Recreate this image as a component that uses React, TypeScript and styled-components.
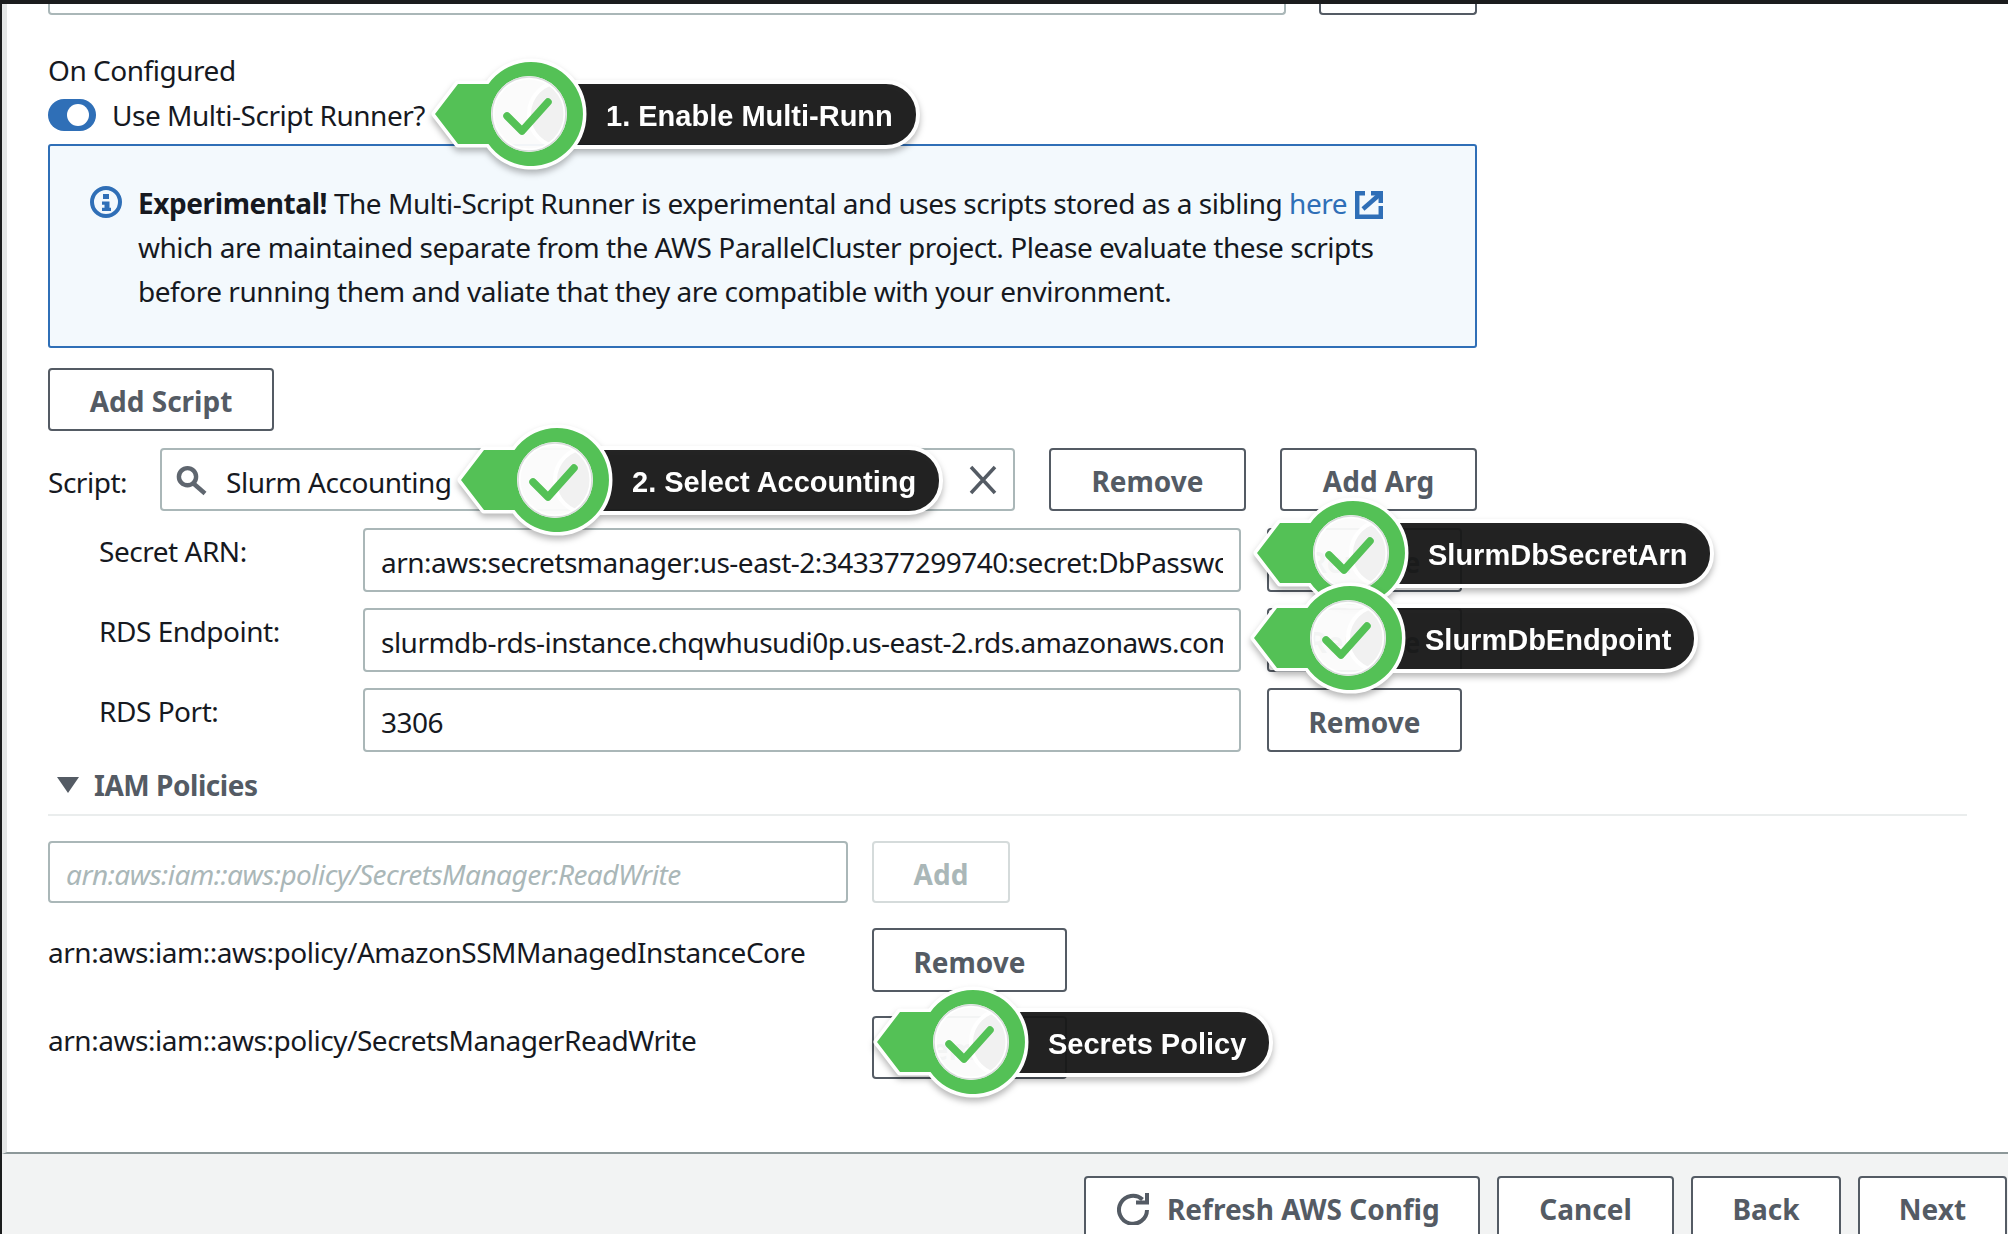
import React from 'react';
import styled, { createGlobalStyle } from 'styled-components';

const GlobalStyle = createGlobalStyle`
  html, body { margin: 0; padding: 0; background: #f2f3f3; }
  * { box-sizing: border-box; }
`;

const Page = styled.div`
  position: relative;
  width: 2008px;
  height: 1234px;
  overflow: hidden;
  display: flex;
  flex-direction: column;
  background: #f2f3f3;
  border-top: 4px solid #1b1c1d;
  border-left: 2px solid #1b1c1d;
  font-family: 'Noto Sans', sans-serif;
  font-size: 28px;
  letter-spacing: -0.47px;
  line-height: 44px;
  color: #16191f;
`;

const Panel = styled.div`
  height: 1150px;
  flex: none;
  background: #fff;
  border-left: 5px solid #e4e6e6;
  border-bottom: 2px solid #8d9899;
  padding-left: 41px;
`;

const Column = styled.div`
  width: 1429px;
`;

const TopStub = styled.div`
  display: flex;
  height: 11px;
  gap: 33px;
`;

const StubInput = styled.div`
  width: 1238px;
  border: 2px solid #aab7b8;
  border-top: 0;
  border-radius: 0 0 4px 4px;
`;

const StubButton = styled.div`
  width: 158px;
  border: 2px solid #545b64;
  border-top: 0;
  border-radius: 0 0 4px 4px;
`;

const SectionLabel = styled.div`
  margin-top: 33px;
`;

const ToggleRow = styled.div`
  display: flex;
  align-items: center;
  gap: 16px;
  height: 44px;
  margin-top: 1px;
`;

const Toggle = styled.div`
  position: relative;
  width: 48px;
  height: 32px;
  border-radius: 16px;
  background: #2f6fb7;
  &::after {
    content: '';
    position: absolute;
    top: 5px;
    right: 7px;
    width: 22px;
    height: 22px;
    border-radius: 50%;
    background: #fff;
  }
`;

const Alert = styled.div`
  display: flex;
  gap: 16px;
  height: 204px;
  margin-top: 7px;
  padding: 35px 0 0 40px;
  background: #f3f9fd;
  border: 2px solid #2f6fb7;
  border-radius: 3px;
`;

const AlertIcon = styled.svg`
  flex: none;
  width: 32px;
  height: 32px;
  margin-top: 5px;
`;

const AlertText = styled.div`
  white-space: nowrap;
  strong { font-weight: 700; letter-spacing: -0.42px; }
`;

const HereLink = styled.a`
  color: #2f6fb7;
  text-decoration: none;
`;

const ExternalIcon = styled.svg`
  width: 28px;
  height: 28px;
  margin-left: 8px;
  vertical-align: -5px;
`;

const Button = styled.button<{ $width: number; $height?: number; $disabled?: boolean }>`
  flex: none;
  display: inline-flex;
  align-items: center;
  justify-content: center;
  width: ${({ $width }) => $width}px;
  height: ${({ $height }) => $height ?? 63}px;
  padding: 3px 0 0;
  background: #fff;
  border: 2px solid ${({ $disabled }) => ($disabled ? '#d5dbdb' : '#545b64')};
  border-radius: 4px;
  color: ${({ $disabled }) => ($disabled ? '#aab7b8' : '#545b64')};
  font-family: inherit;
  font-size: 28px;
  font-weight: 700;
  letter-spacing: 0;
  line-height: 44px;
`;

const RefreshButton = styled(Button)`
  justify-content: flex-start;
  gap: 18px;
  padding-left: 31px;
`;

const AddScriptRow = styled.div`
  margin-top: 20px;
`;

const ScriptRow = styled.div`
  display: flex;
  align-items: center;
  margin-top: 17px;
  height: 63px;
  gap: 34px;
`;

const ScriptLabel = styled.div`
  width: 78px;
  margin-top: 4px;
`;

const SearchField = styled.div`
  display: flex;
  align-items: center;
  width: 855px;
  height: 63px;
  padding: 0 14px;
  border: 2px solid #aab7b8;
  border-radius: 4px;
  gap: 18px;
`;

const SearchValue = styled.span`
  flex: 1;
  margin-top: 4px;
`;

const FieldIcon = styled.svg`
  flex: none;
  width: 32px;
  height: 32px;
`;

const ArgList = styled.div`
  display: flex;
  flex-direction: column;
  gap: 16px;
  margin-top: 17px;
  padding-left: 51px;
`;

const ArgRow = styled.div`
  display: flex;
  gap: 26px;
`;

const ArgLabel = styled.div`
  width: 238px;
  padding-top: 1px;
`;

const TextInput = styled.input<{ $width: number; $height?: number }>`
  flex: none;
  width: ${({ $width }) => $width}px;
  height: ${({ $height }) => $height ?? 64}px;
  padding: 4px 16px 0;
  background: #fff;
  border: 2px solid #aab7b8;
  border-radius: 4px;
  color: #16191f;
  font-family: inherit;
  font-size: 28px;
  letter-spacing: -0.52px;
  &::placeholder {
    color: #aab7b8;
    font-style: italic;
    opacity: 1;
  }
`;

const PolicyHeader = styled.div`
  display: flex;
  align-items: center;
  gap: 15px;
  width: 1919px;
  height: 52px;
  margin-top: 12px;
  padding: 0 0 8px 9px;
  border-bottom: 2px solid #eaeded;
  color: #545b64;
  font-weight: 700;
`;

const Caret = styled.div`
  width: 0;
  height: 0;
  border-left: 11px solid transparent;
  border-right: 11px solid transparent;
  border-top: 16px solid #545b64;
`;

const PolicyForm = styled.div`
  display: flex;
  gap: 24px;
  margin-top: 25px;
`;

const PolicyRow = styled.div<{ $gap: number }>`
  display: flex;
  margin-top: ${({ $gap }) => $gap}px;
`;

const PolicyName = styled.div`
  width: 824px;
  padding-top: 2px;
`;

const Footer = styled.div`
  display: flex;
  justify-content: flex-end;
  gap: 17px;
  padding: 22px 1px 0 0;
`;

const Badge = styled.div<{ $x: number; $y: number }>`
  position: absolute;
  left: ${({ $x }) => $x - 2}px;
  top: ${({ $y }) => $y - 4}px;
  display: flex;
  filter: drop-shadow(0 4px 3px rgba(0, 0, 0, 0.28));
`;

const BadgePill = styled.div`
  margin-left: 92px;
  padding: 0 23px 0 75px;
  height: 69px;
  border: 4px solid #fff;
  border-radius: 34px;
  background: rgba(24, 24, 24, 0.94);
  color: #fff;
  font-family: 'Liberation Sans', Arial, sans-serif;
  font-size: 29px;
  font-weight: 700;
  letter-spacing: 0;
  line-height: 65px;
  white-space: nowrap;
`;

const BadgeMark = styled.svg`
  position: absolute;
  left: -6px;
  top: -26px;
  width: 170px;
  height: 120px;
  overflow: visible;
`;

const StepBadge: React.FC<{ x: number; y: number; label: string }> = ({ x, y, label }) => (
  <Badge $x={x} $y={y}>
    <BadgePill>{label}</BadgePill>
    <BadgeMark viewBox="-6 -60 170 120">
      <path
        d="M0 0 L23 -30 L53.5 -30 A52 52 0 1 1 53.5 30 L23 30 Z M132 0 A38 38 0 1 0 56 0 A38 38 0 1 0 132 0 Z"
        fillRule="evenodd"
        fill="#54c156"
        stroke="#fff"
        strokeWidth="7"
        strokeLinejoin="round"
        paintOrder="stroke"
      />
      <circle cx="94" cy="0" r="37" fill="rgba(255,255,255,0.94)" stroke="#d9dcdc" strokeWidth="1.5" />
      <path
        d="M72 2 L87 17 L113 -12"
        fill="none"
        stroke="#54c156"
        strokeWidth="7.5"
        strokeLinecap="round"
        strokeLinejoin="round"
      />
    </BadgeMark>
  </Badge>
);

const App: React.FC = () => (
  <Page>
    <GlobalStyle />
    <Panel>
      <Column>
        <TopStub>
          <StubInput />
          <StubButton />
        </TopStub>
        <SectionLabel>On Configured</SectionLabel>
        <ToggleRow>
          <Toggle />
          <span>Use Multi-Script Runner?</span>
        </ToggleRow>
        <Alert>
          <AlertIcon viewBox="0 0 32 32">
            <circle cx="16" cy="16" r="14" fill="none" stroke="#2f6fb7" strokeWidth="4" />
            <rect x="13" y="8" width="6" height="5" fill="#2f6fb7" />
            <path d="M12 15.5h7.5v6.2h1.5V25h-9v-3.3h2.5v-3H12z" fill="#2f6fb7" />
          </AlertIcon>
          <AlertText>
            <strong>Experimental!</strong> The Multi-Script Runner is experimental and uses scripts stored as a sibling{' '}
            <HereLink>here</HereLink>
            <ExternalIcon viewBox="0 0 28 28" fill="none" stroke="#2f6fb7" strokeWidth="4.5">
              <path d="M10 2.2H2.2v23.6h23.6V15" />
              <path d="M16 2.2h9.8v9.8" />
              <path d="M8 18L24 4" />
            </ExternalIcon>
            <br />
            which are maintained separate from the AWS ParallelCluster project. Please evaluate these scripts
            <br />
            before running them and valiate that they are compatible with your environment.
          </AlertText>
        </Alert>
        <AddScriptRow>
          <Button $width={226}>Add Script</Button>
        </AddScriptRow>
        <ScriptRow>
          <ScriptLabel>Script:</ScriptLabel>
          <SearchField>
            <FieldIcon viewBox="0 0 32 32" fill="none" stroke="#5f666f" strokeWidth="4.4">
              <circle cx="11.5" cy="12.7" r="8.6" />
              <path d="M17.5 19.5L29 29.5" />
            </FieldIcon>
            <SearchValue>Slurm Accounting</SearchValue>
            <FieldIcon viewBox="0 0 32 32" fill="none" stroke="#545b64" strokeWidth="3.5">
              <path d="M4 3L28 29M28 3L4 29" />
            </FieldIcon>
          </SearchField>
          <Button $width={197}>Remove</Button>
          <Button $width={197}>Add Arg</Button>
        </ScriptRow>
        <ArgList>
          <ArgRow>
            <ArgLabel>Secret ARN:</ArgLabel>
            <TextInput $width={878} readOnly value="arn:aws:secretsmanager:us-east-2:343377299740:secret:DbPassword" />
            <Button $width={195} $height={64}>Remove</Button>
          </ArgRow>
          <ArgRow>
            <ArgLabel>RDS Endpoint:</ArgLabel>
            <TextInput $width={878} readOnly value="slurmdb-rds-instance.chqwhusudi0p.us-east-2.rds.amazonaws.com" />
            <Button $width={195} $height={64}>Remove</Button>
          </ArgRow>
          <ArgRow>
            <ArgLabel>RDS Port:</ArgLabel>
            <TextInput $width={878} readOnly value="3306" />
            <Button $width={195} $height={64}>Remove</Button>
          </ArgRow>
        </ArgList>
      </Column>
      <PolicyHeader>
        <Caret />
        IAM Policies
      </PolicyHeader>
      <PolicyForm>
        <TextInput $width={800} $height={62} readOnly placeholder="arn:aws:iam::aws:policy/SecretsManager:ReadWrite" />
        <Button $width={138} $height={62} $disabled>Add</Button>
      </PolicyForm>
      <PolicyRow $gap={25}>
        <PolicyName>arn:aws:iam::aws:policy/AmazonSSMManagedInstanceCore</PolicyName>
        <Button $width={195} $height={64}>Remove</Button>
      </PolicyRow>
      <PolicyRow $gap={24}>
        <PolicyName>arn:aws:iam::aws:policy/SecretsManagerReadWrite</PolicyName>
        <Button $width={195}>Remove</Button>
      </PolicyRow>
    </Panel>
    <Footer>
      <RefreshButton $width={396}>
        <FieldIcon viewBox="0 0 32 32" fill="none" stroke="#545b64" strokeWidth="4">
          <path d="M25.5 6.5A14 14 0 1 0 30 17" />
          <path d="M19 9.5H30V0" />
        </FieldIcon>
        Refresh AWS Config
      </RefreshButton>
      <Button $width={177}>Cancel</Button>
      <Button $width={150}>Back</Button>
      <Button $width={149}>Next</Button>
    </Footer>
    <StepBadge x={435} y={80} label="1. Enable Multi-Runn" />
    <StepBadge x={461} y={446} label="2. Select Accounting" />
    <StepBadge x={1257} y={519} label="SlurmDbSecretArn" />
    <StepBadge x={1254} y={604} label="SlurmDbEndpoint" />
    <StepBadge x={877} y={1008} label="Secrets Policy" />
  </Page>
);

export default App;
